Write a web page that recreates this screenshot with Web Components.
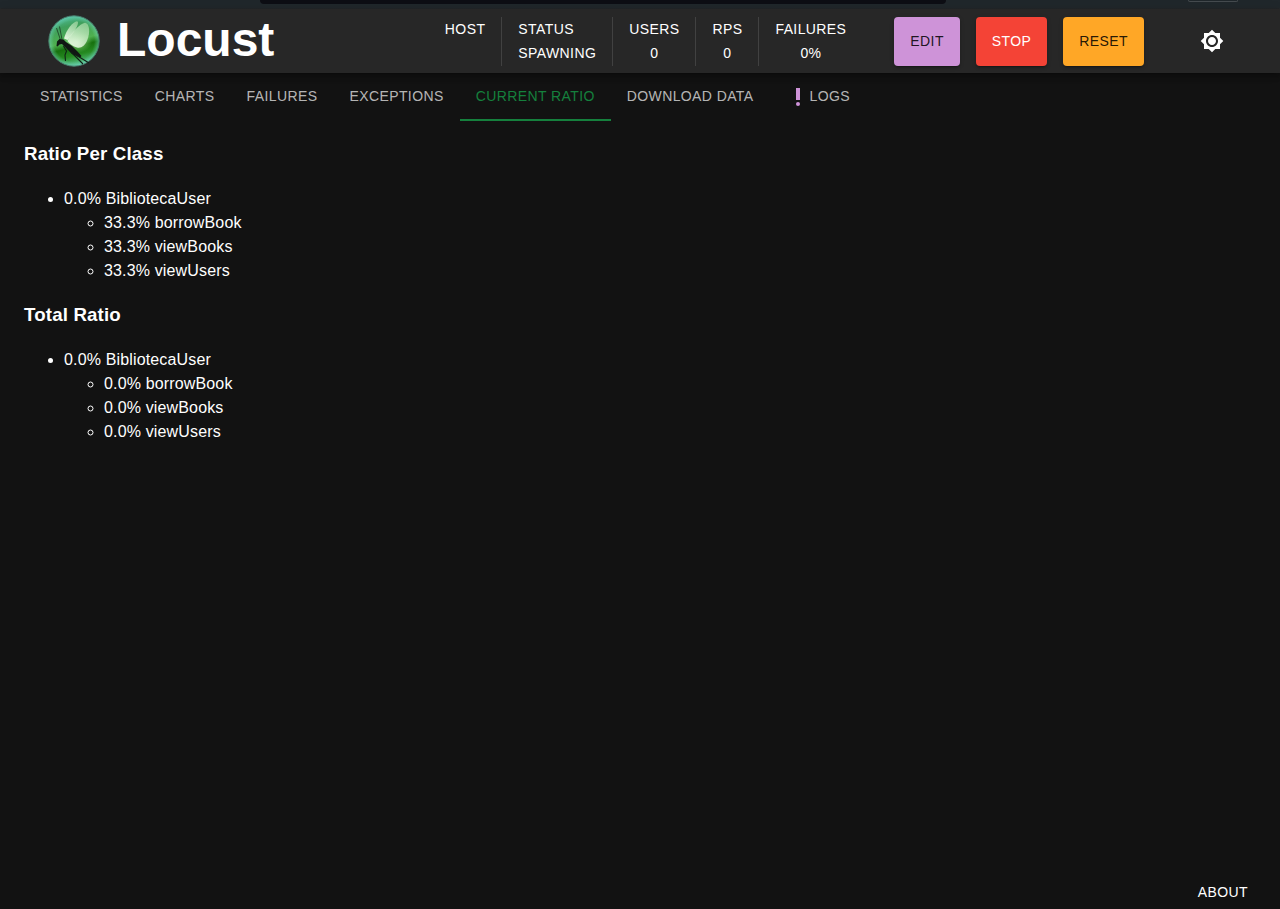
<!DOCTYPE html>
<html lang="en">
<head>
<meta charset="utf-8">
<title>Locust</title>
<style>
html, body { margin: 0; height: 100%; background: #121212; }
body { color: #fff; font: 16px/1.5 "Liberation Sans", Arial, sans-serif; overflow: hidden; }
</style>
</head>
<body>
<locust-app></locust-app>
<script>
const define = (name, markup, setup) => {
  const template = document.createElement('template');
  template.innerHTML = markup;
  customElements.define(name, class extends HTMLElement {
    constructor() {
      super();
      this.attachShadow({ mode: 'open' }).append(template.content.cloneNode(true));
    }
    connectedCallback() { if (setup) setup(this, this.shadowRoot); }
  });
};

define('window-strip', `
<style>
:host { display: flex; height: 9px; background: linear-gradient(#20272b 7px, #252729); }
.address { margin-left: 260px; width: 686px; height: 4px; background: #0d0e14; border-radius: 0 0 6px 6px; }
.control { margin-left: 242px; width: 50px; height: 2px; box-sizing: border-box; border: 1px solid #454b4f; border-top: 0; border-radius: 0 0 3px 3px; }
</style>
<div class="address"></div><div class="control"></div>`);

define('locust-logo', `
<style>
:host { display: flex; align-items: center; }
svg { display: block; width: 52px; height: 52px; }
h1 { margin: 0 0 2px 17px; font-size: 48px; line-height: 56px; font-weight: 700; }
</style>
<svg viewBox="0 0 52 52">
  <defs>
    <linearGradient id="ball" x1=".35" y1="0" x2=".6" y2="1">
      <stop offset="0" stop-color="#4fbd9a"/><stop offset=".2" stop-color="#3f9f5c"/>
      <stop offset=".5" stop-color="#4fb04f"/><stop offset=".62" stop-color="#17700f"/>
      <stop offset=".78" stop-color="#268b22"/><stop offset="1" stop-color="#61caa0"/>
    </linearGradient>
    <radialGradient id="glow"><stop offset="0" stop-color="#d8f6cc" stop-opacity=".75"/><stop offset="1" stop-color="#8ee27e" stop-opacity="0"/></radialGradient>
    <radialGradient id="rim"><stop offset=".8" stop-color="#7be0c6" stop-opacity="0"/><stop offset="1" stop-color="#72d8cd" stop-opacity=".5"/></radialGradient>
    <linearGradient id="wing" x1=".8" y1="0" x2=".3" y2="1"><stop offset="0" stop-color="#a8dca8" stop-opacity=".7"/><stop offset="1" stop-color="#eefbe8" stop-opacity=".9"/></linearGradient>
  </defs>
  <circle cx="26" cy="26" r="25.2" fill="url(#ball)"/>
  <ellipse cx="29" cy="27" rx="15" ry="11" fill="url(#glow)"/>
  <circle cx="26" cy="26" r="25.2" fill="url(#rim)" stroke="#477969" stroke-width="1"/>
  <path d="M16 23.500C18 15 25 6.500 29 6.200C32.500 7 26 18 19.500 25z" fill="url(#wing)"/>
  <path d="M19.500 26C23 18 32 8.500 37 7.800C42 8.500 42 18 39.500 24.500C37 31 33 33.500 29 32.500C25 31.500 22 29 19.500 26z" fill="url(#wing)"/>
  <path d="M8.500 31l.5-4.500 2.500-2.500 4 .5 2.500 2.500 6 4 5.500 5.500 4 4.500-1.500 1.500-8-3.500-7-7-3-3-2.500.5-2 2z" fill="#101713"/>
  <path d="M15.500 31l3 5-1.500 4 .5 6M23 37l12 12M28 40l13 8" fill="none" stroke="#102016" stroke-width="1.100"/>
  <path d="M12.500 25L8.500 13M14 24.500l-2.500-13" fill="none" stroke="#102016" stroke-opacity=".8" stroke-width=".8"/>
</svg>
<h1>Locust</h1>`);

define('stat-item', `
<style>
:host { display: flex; flex-direction: column; align-items: center; padding: 0 16px; height: 49px;
  font-size: 14px; line-height: 24.5px; letter-spacing: .4px; text-transform: uppercase; }
:host(:not(:first-child)) { border-left: 1px solid #414141; }
:host([wide]) { align-items: flex-start; }
</style>
<span></span><slot></slot>`, (el, root) => root.querySelector('span').textContent = el.getAttribute('label'));

define('action-button', `
<style>
:host { display: block; }
button { display: block; height: 49px; margin: 0; padding: 0 16px; border: 0; border-radius: 4px;
  background: var(--fill); color: var(--ink); font: inherit; font-size: 14px; line-height: 24.5px; letter-spacing: .4px;
  box-shadow: 0 3px 1px -2px rgba(0,0,0,.2), 0 2px 2px rgba(0,0,0,.14), 0 1px 5px rgba(0,0,0,.12); }
</style>
<button><slot></slot></button>`);

define('app-header', `
<style>
:host { display: flex; align-items: center; height: 64px; padding-left: 48px; background: #272727; position: relative;
  box-shadow: 0 2px 4px -1px rgba(0,0,0,.2), 0 4px 5px rgba(0,0,0,.14), 0 1px 10px rgba(0,0,0,.12); }
.right { display: flex; align-items: center; margin-left: auto; padding-right: 56px; }
.stats { display: flex; }
.actions { display: flex; gap: 16px; margin-left: 32px; }
.theme { display: block; width: 24px; height: 24px; margin-left: 56px; fill: #fff; }
</style>
<locust-logo></locust-logo>
<div class="right">
  <div class="stats">
    <stat-item label="Host"></stat-item>
    <stat-item label="Status" wide>spawning</stat-item>
    <stat-item label="Users">0</stat-item>
    <stat-item label="RPS">0</stat-item>
    <stat-item label="Failures">0%</stat-item>
  </div>
  <div class="actions">
    <action-button style="--fill:#ce93d8;--ink:rgba(0,0,0,.87)">EDIT</action-button>
    <action-button style="--fill:#f44336;--ink:#fff">STOP</action-button>
    <action-button style="--fill:#ffa726;--ink:rgba(0,0,0,.87)">RESET</action-button>
  </div>
  <svg class="theme" viewBox="0 0 24 24"><path d="M20 8.69V4h-4.69L12 .69 8.69 4H4v4.69L.69 12 4 15.31V20h4.69L12 23.31 15.31 20H20v-4.69L23.31 12 20 8.69zM12 18c-3.31 0-6-2.69-6-6s2.69-6 6-6 6 2.69 6 6-2.69 6-6 6zm0-10c-2.21 0-4 1.79-4 4s1.79 4 4 4 4-1.79 4-4-1.79-4-4-4z"/></svg>
</div>`);

define('nav-tab', `
<style>
:host { display: flex; align-items: center; height: 48px; box-sizing: border-box; padding: 0 16px;
  color: rgba(255,255,255,.7); font-size: 14px; line-height: 17.5px; letter-spacing: .4px; white-space: nowrap; }
:host([selected]) { color: #15803d; box-shadow: inset 0 -2px #15803d; }
</style>
<slot></slot>`);

define('nav-tabs', `
<style>
:host { display: flex; height: 48px; padding-left: 24px; }
nav-tab { padding-bottom: 1px; }
svg { width: 24px; height: 24px; fill: #ce93d8; }
</style>
<nav-tab>STATISTICS</nav-tab><nav-tab>CHARTS</nav-tab><nav-tab>FAILURES</nav-tab><nav-tab>EXCEPTIONS</nav-tab>
<nav-tab selected>CURRENT RATIO</nav-tab><nav-tab>DOWNLOAD DATA</nav-tab>
<nav-tab><svg viewBox="0 0 24 24"><circle cx="12" cy="19" r="2"/><path d="M10 3h4v12h-4z"/></svg>LOGS</nav-tab>`);

define('ratio-section', `
<style>
:host { display: block; letter-spacing: .15px; }
h3 { margin: 0; padding: 18px 0 19px; font-size: 18.72px; font-weight: 700; line-height: 28px; }
ul { margin: 0; padding-left: 40px; }
</style>
<h3></h3>
<ul><li>0.0% BibliotecaUser<ul></ul></li></ul>`, (el, root) => {
  root.querySelector('h3').textContent = el.getAttribute('heading');
  root.querySelector('li ul').replaceChildren(...['borrowBook', 'viewBooks', 'viewUsers'].map(task => {
    const item = document.createElement('li');
    item.textContent = el.getAttribute('ratio') + ' ' + task;
    return item;
  }));
});

define('locust-app', `
<style>
:host { display: flex; flex-direction: column; height: 100vh; }
window-strip, app-header, nav-tabs { flex-shrink: 0; }
main { flex: 1; padding: 1px 24px 0; }
footer { padding: 0 32px 5px 0; text-align: right; font-size: 14px; line-height: 24.5px; letter-spacing: .4px; }
</style>
<window-strip></window-strip>
<app-header></app-header>
<nav-tabs></nav-tabs>
<main>
  <ratio-section heading="Ratio Per Class" ratio="33.3%"></ratio-section>
  <ratio-section heading="Total Ratio" ratio="0.0%"></ratio-section>
</main>
<footer>ABOUT</footer>`);
</script>
</body>
</html>
